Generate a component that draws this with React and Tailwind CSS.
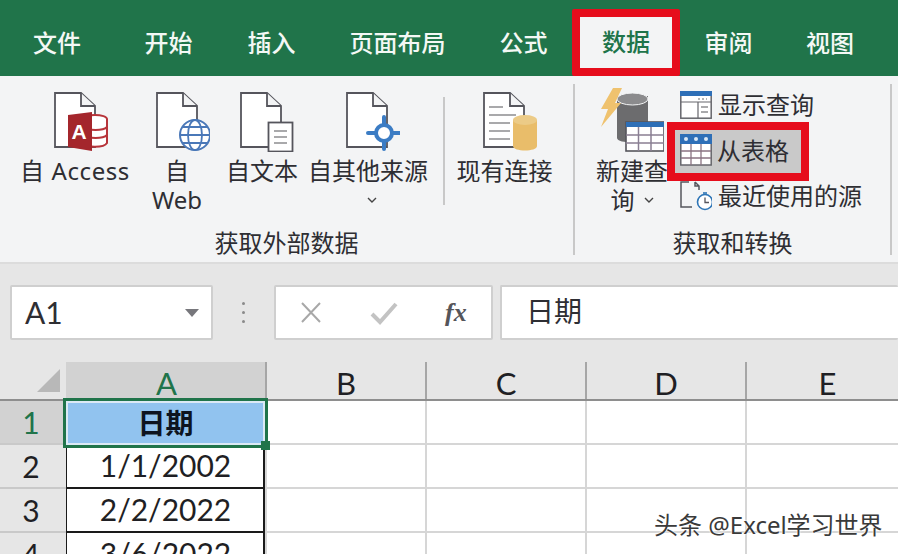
const tabs = [
  { label: "文件", w: "w-[114px]" },
  { label: "开始", w: "w-[109px]" },
  { label: "插入", w: "w-[97px]" },
  { label: "页面布局", w: "w-[155px]" },
  { label: "公式", w: "w-[97px]" },
  { label: "数据", w: "w-[108px]", active: true },
  { label: "审阅", w: "w-[97px]" },
  { label: "视图", w: "w-[106px]" },
];

function Page({ x = 1 }) {
  return (
    <>
      <path d={`M${x + 26} 1 H${x} V55 H${x + 40} V14 L${x + 26} 1 Z`} fill="#ffffff" stroke="#55555c" strokeWidth="1.8" />
      <path d={`M${x + 26} 1 V14 H${x + 40}`} fill="#f3f4f5" stroke="#55555c" strokeWidth="1.8" />
    </>
  );
}

function AccessIcon() {
  return (
    <svg width="54" height="60" viewBox="0 0 54 60" className="ml-[12px]">
      <Page />
      <ellipse cx="41" cy="27" rx="12" ry="4" fill="#fff" stroke="#b7343a" strokeWidth="2" />
      <path d="M29 27 V51 C32 56 50 56 53 51 V27 M30 35 C34 39 49 39 53 35 M30 43 C34 47 49 47 53 43" fill="#fff" stroke="#b7343a" strokeWidth="2" />
      <path d="M14 23 L38 20 V59 L14 55 Z" fill="#a4262c" />
      <text x="25" y="47" textAnchor="middle" fontFamily="Liberation Sans" fontWeight="700" fontSize="21" fill="#fff">A</text>
    </svg>
  );
}

function WebIcon() {
  return (
    <svg width="54" height="60" viewBox="0 0 54 60" className="ml-[12px]">
      <Page />
      <circle cx="39" cy="43" r="15" fill="#fff" stroke="#4a78b8" strokeWidth="2" />
      <ellipse cx="39" cy="43" rx="7" ry="15" fill="none" stroke="#4a78b8" strokeWidth="1.8" />
      <path d="M24 43 H54 M27 35 H51 M27 51 H51" stroke="#4a78b8" strokeWidth="1.8" />
    </svg>
  );
}

function TextIcon() {
  return (
    <svg width="54" height="60" viewBox="0 0 54 60" className="ml-[10px]">
      <Page />
      <rect x="28.5" y="30.5" width="24" height="29" fill="#fff" stroke="#55555c" strokeWidth="1.8" />
      <path d="M34 39 H47 M34 45 H47 M34 51 H47" stroke="#8d8d90" strokeWidth="1.6" />
    </svg>
  );
}

function OtherIcon() {
  return (
    <svg width="54" height="60" viewBox="0 0 54 60" className="ml-[10px]">
      <Page />
      <path d="M38 25 V33 M38 49 V57 M22 41 H30 M46 41 H54" stroke="#3b7cc4" strokeWidth="4" strokeLinecap="round" />
      <circle cx="38" cy="41" r="8" fill="#fff" stroke="#3b7cc4" strokeWidth="4" />
    </svg>
  );
}

function ExistingIcon() {
  return (
    <svg width="54" height="60" viewBox="0 0 54 60" className="ml-[10px]">
      <Page />
      <path d="M6 15 H20 M6 23 H33 M6 31 H27 M6 39 H27 M6 47 H27" stroke="#8d8d90" strokeWidth="1.6" />
      <path d="M30 28 V54 C30 60 54 60 54 54 V28 Z" fill="#e9bd6a" />
      <ellipse cx="42" cy="28" rx="12" ry="5" fill="#eccb87" />
    </svg>
  );
}

function QueryIcon() {
  return (
    <svg width="64" height="64" viewBox="0 0 64 64" className="-mt-[4px]">
      <path d="M17 8 V50 C17 56 48 56 48 50 V8 Z" fill="#6c6c6e" />
      <ellipse cx="32.5" cy="11" rx="15.5" ry="6" fill="#8b8b8d" stroke="#f3f4f5" strokeWidth="1" />
      <path d="M13 0 H22 L15 15 H21 L1 39 L8 21 H1 Z" fill="#efc26e" />
      <rect x="26" y="34" width="38" height="29" fill="#fff" stroke="#55555c" strokeWidth="1.6" />
      <rect x="26" y="34" width="38" height="5" fill="#2e6fb7" />
      <path d="M38.5 39 V63 M51 39 V63 M26 47 H64 M26 55 H64" stroke="#8a7f93" strokeWidth="1.5" />
    </svg>
  );
}

function ShowQueryIcon() {
  return (
    <svg width="32" height="28" viewBox="0 0 32 28" className="shrink-0">
      <rect x="0.8" y="0.8" width="30.4" height="26.4" fill="#fff" stroke="#66666c" strokeWidth="1.5" />
      <rect x="0" y="0" width="32" height="5" fill="#2e6fb7" />
      <path d="M1 11 H31 M18 11 V27" stroke="#66666c" strokeWidth="1.2" />
      <path d="M18 8 H27" stroke="#9a9a9a" strokeWidth="1.4" strokeDasharray="2 2" />
      <path d="M21 16 H28 M21 21 H28" stroke="#8d8d90" strokeWidth="1.4" />
    </svg>
  );
}

function TableIcon() {
  return (
    <svg width="32" height="32" viewBox="0 0 32 32" className="-mt-[3px] shrink-0">
      <rect x="0.8" y="1" width="30.4" height="30" fill="#fff" stroke="#66666c" strokeWidth="1.5" />
      <rect x="0" y="0" width="32" height="10" fill="#2e6fb7" />
      <circle cx="6" cy="5" r="2" fill="#dbe8f6" />
      <circle cx="16" cy="5" r="2" fill="#dbe8f6" />
      <circle cx="26" cy="5" r="2" fill="#dbe8f6" />
      <path d="M11 10 V31 M21 10 V31 M1 17 H31 M1 24 H31" stroke="#8a7383" strokeWidth="1.3" />
    </svg>
  );
}

function RecentIcon() {
  return (
    <svg width="32" height="30" viewBox="0 0 32 30" className="shrink-0">
      <path d="M9 1 H1 V26 H12 M15 1 L19 5 V9 M15 1 V5 H19" fill="none" stroke="#55555c" strokeWidth="1.5" />
      <circle cx="25" cy="21" r="7.5" fill="#fff" stroke="#2e75b6" strokeWidth="1.6" />
      <path d="M25 16.5 V21.5 H29" fill="none" stroke="#55555c" strokeWidth="1.3" />
      <path d="M23 12 H27" stroke="#2e75b6" strokeWidth="1.6" />
    </svg>
  );
}

function Chevron() {
  return (
    <svg width="10" height="6" viewBox="0 0 10 6">
      <path d="M1 1 L5 5 L9 1" fill="none" stroke="#444" strokeWidth="1.4" />
    </svg>
  );
}

function RibbonButton({ icon, w, children }) {
  return (
    <div className={`flex flex-col items-center pt-[16px] ${w}`}>
      <div className="flex h-[60px] items-start">{icon}</div>
      <div className="mt-[4px] text-center leading-[29px] whitespace-nowrap">{children}</div>
    </div>
  );
}

function SmallRow({ icon, label }) {
  return (
    <div className="flex items-center gap-[6px] pl-[13px]">
      {icon}
      <span className="whitespace-nowrap leading-[30px]">{label}</span>
    </div>
  );
}

const rows = [
  { n: "1", date: "日期" },
  { n: "2", date: "1/1/2002" },
  { n: "3", date: "2/2/2022" },
  { n: "4", date: "3/6/2022" },
];

const otherCols = ["w-[160px]", "w-[160px]", "w-[160px]", "w-[153px]"];

export default function App() {
  return (
    <div className="relative flex h-[554px] w-[898px] flex-col overflow-hidden bg-[#e6e6e6] font-['Noto_Sans','Noto_Sans_CJK_SC',sans-serif] text-[24px] text-[#2e2e33]">
      {/* tabs */}
      <div className="flex h-[76px] shrink-0 bg-[#20744a] font-medium text-[#f4f8f5]">
        {tabs.map((t) =>
          t.active ? (
            <div key={t.label} className={`flex ${t.w} items-end justify-center`}>
              <div className="flex h-[67px] w-[108px] items-center justify-center rounded-[2px] border-[8px] border-[#e60d1c] bg-[#f3f4f5] pb-[2px] text-[#20744a]">
                {t.label}
              </div>
            </div>
          ) : (
            <div key={t.label} className={`flex ${t.w} items-center justify-center pt-[10px]`}>
              {t.label}
            </div>
          )
        )}
      </div>

      {/* ribbon */}
      <div className="flex h-[188px] shrink-0 border-b-2 border-[#dcdcdc] bg-[#f3f4f5]">
        <div className="flex w-[573px] flex-col">
          <div className="flex h-[155px] pl-[16px]">
            <RibbonButton icon={<AccessIcon />} w="w-[118px]">
              <span className="tracking-[0.6px]">自 Access</span>
            </RibbonButton>
            <RibbonButton icon={<WebIcon />} w="w-[86px]">
              <div>自</div>
              <div>Web</div>
            </RibbonButton>
            <RibbonButton icon={<TextIcon />} w="w-[84px]">自文本</RibbonButton>
            <RibbonButton icon={<OtherIcon />} w="w-[128px]">
              <div>自其他来源</div>
              <div className="flex h-[29px] items-center justify-center pl-[8px]">
                <Chevron />
              </div>
            </RibbonButton>
            <div className="ml-[11px] mt-[21px] h-[108px] w-[2px] bg-[#c8c8c8]" />
            <RibbonButton icon={<ExistingIcon />} w="w-[119px]">现有连接</RibbonButton>
          </div>
          <div className="text-center leading-[24px]">获取外部数据</div>
        </div>
        <div className="mt-[8px] h-[171px] w-[2px] shrink-0 bg-[#c8c8c8]" />

        <div className="flex w-[315px] flex-col">
          <div className="flex h-[155px] pl-[21px]">
            <div className="flex w-[72px] flex-col items-center pt-[16px]">
              <div className="flex h-[60px] items-start">
                <QueryIcon />
              </div>
              <div className="mt-[4px] text-center leading-[29px] whitespace-nowrap">
                <div>新建查</div>
                <div className="flex items-center justify-center gap-[9px]">
                  询
                  <Chevron />
                </div>
              </div>
            </div>
            <div className="relative -ml-px flex flex-col pt-[14px]">
              <div className="h-[32px]">
                <SmallRow icon={<ShowQueryIcon />} label="显示查询" />
              </div>
              <div className="flex h-[59px] w-[142px] items-center gap-[5px] border-[8px] border-[#e60d1c] bg-[#c9c9c9] pl-[5px]">
                <TableIcon />
                <span className="whitespace-nowrap pb-[2px]">从表格</span>
              </div>
              <div className="h-[32px]">
                <SmallRow icon={<RecentIcon />} label="最近使用的源" />
              </div>
            </div>
          </div>
          <div className="text-center leading-[24px]">获取和转换</div>
        </div>
        <div className="mt-[8px] h-[171px] w-[2px] shrink-0 bg-[#c8c8c8]" />
      </div>

      {/* formula bar */}
      <div className="flex h-[98px] shrink-0 items-start pt-[21px]">
        <div className="ml-[10px] flex h-[55px] w-[203px] items-center justify-between rounded-[2px] border-2 border-[#cfcfcf] bg-white pl-[13px] pr-[12px] font-['Lato',sans-serif] text-[30px]">
          <span>A1</span>
          <svg width="14" height="8" viewBox="0 0 14 8">
            <path d="M0 0 H14 L7 8 Z" fill="#77777c" />
          </svg>
        </div>
        <div className="flex h-[55px] w-[61px] flex-col items-center justify-center gap-[6px]">
          <div className="h-[3px] w-[3px] rounded-full bg-[#8a8a8a]" />
          <div className="h-[3px] w-[3px] rounded-full bg-[#8a8a8a]" />
          <div className="h-[3px] w-[3px] rounded-full bg-[#8a8a8a]" />
        </div>
        <div className="flex h-[55px] w-[219px] items-center rounded-[2px] border-2 border-[#cfcfcf] bg-white">
          <svg width="24" height="24" viewBox="0 0 24 24" className="ml-[23px]">
            <path d="M3 2 L21 21 M21 2 L3 21" stroke="#a8a8a8" strokeWidth="2" />
          </svg>
          <svg width="28" height="24" viewBox="0 0 28 24" className="ml-[47px]">
            <path d="M2 13 L10 21 L26 3" fill="none" stroke="#c3c3c3" strokeWidth="4" />
          </svg>
          <span className="ml-[47px] font-['Liberation_Serif',serif] text-[26px] font-bold italic leading-none text-[#55555a]">
            fx
          </span>
        </div>
        <div className="ml-[7px] flex h-[55px] flex-1 items-center rounded-[2px] border-2 border-r-0 border-[#cfcfcf] bg-white pb-[3px] pl-[24px] text-[28px]">
          日期
        </div>
      </div>

      {/* sheet */}
      <div className="flex h-[39px] shrink-0 border-b-2 border-[#8e8e8e] font-['Lato',sans-serif] text-[31px] leading-[39px]">
        <div className="flex w-[66px] items-end justify-end pb-[7px] pr-[6px]">
          <svg width="23" height="23" viewBox="0 0 23 23">
            <path d="M23 0 V23 H0 Z" fill="#b8b8b8" />
          </svg>
        </div>
        <div className="w-[199px] bg-[#d2d2d2] pl-[2px] pt-[2px] text-center text-[#20744a]">A</div>
        {["B", "C", "D"].map((c, i) => (
          <div key={c} className={`${otherCols[i]} border-l-2 border-[#a6a6a6] pt-[2px] text-center text-[#1f1f24]`}>
            {c}
          </div>
        ))}
        <div className="w-[153px] border-l-2 border-[#a6a6a6] pl-[10px] pt-[2px] text-center text-[#1f1f24]">E</div>
      </div>
      {rows.map((r, idx) => (
        <div key={r.n} className="flex h-[44px] shrink-0 font-['Lato',sans-serif] text-[30px]">
          <div
            className={`flex w-[66px] items-center justify-center border-b-2 border-[#c9c9c9] pr-[4px] ${
              idx === 0 ? "bg-[#d2d2d2] text-[#20744a]" : "bg-[#e6e6e6] text-[#1f1f24]"
            }`}
          >
            {r.n}
          </div>
          {idx === 0 ? (
            <div className="relative flex w-[199px] items-center justify-center bg-[#91c3ef] pb-[2px] font-['Noto_Sans_CJK_SC',sans-serif] text-[28px] font-bold text-[#0d1420]">
              {r.date}
              <div className="absolute -inset-[3px] border-[3px] border-[#20744a] shadow-[inset_0_0_0_2px_#dbe9f5]" />
              <div className="absolute -bottom-[5px] -right-[5px] h-[9px] w-[9px] bg-[#20744a]" />
            </div>
          ) : (
            <div className="flex w-[199px] items-center justify-center border-x border-b-2 border-[#1a1a1a] border-r-2 bg-white pb-[2px] pl-[1px] text-[#1f1f24]">
              {r.date}
            </div>
          )}
          {otherCols.map((w, i) => (
            <div key={i} className={`${w} border-b-2 border-l-2 border-[#d6d6d6] bg-white`} />
          ))}
        </div>
      ))}

      {/* watermark */}
      <div className="absolute bottom-[14px] left-[654px] whitespace-nowrap text-[24px] leading-[30px] text-[#3a3a3a] [text-shadow:0_0_2px_#ffffff,0_0_2px_#ffffff]">
        头条 @Excel学习世界
      </div>
    </div>
  );
}
